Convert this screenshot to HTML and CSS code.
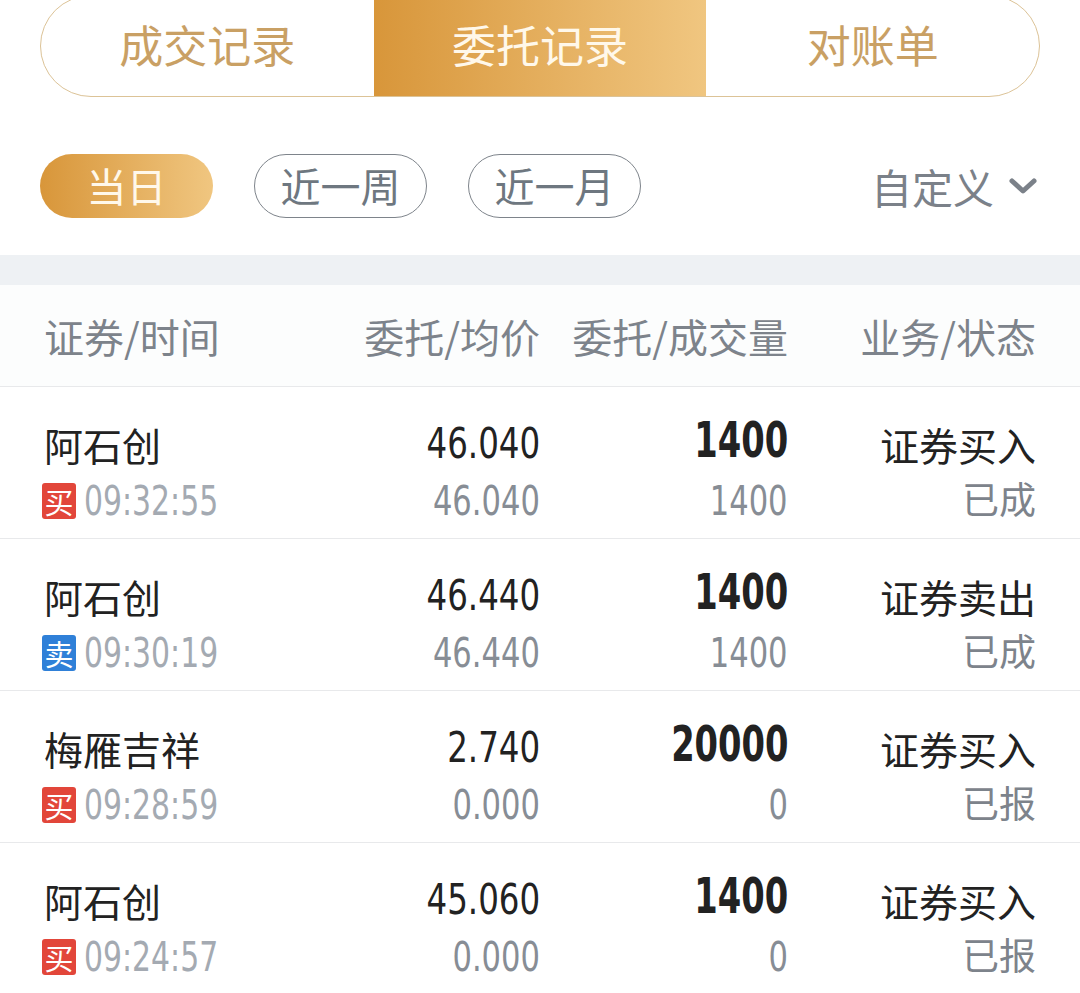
FILE: index.html
```html
<!DOCTYPE html>
<html lang="zh-CN">
<head>
    <meta charset="UTF-8">
    <meta name="viewport" content="width=device-width, initial-scale=1.0">
    <title>委托记录</title>
    <link rel="stylesheet" href="styles.css">
</head>
<body>
    <div class="top">
        <div class="tabs">
            <div class="tab">成交记录</div>
            <div class="tab active">委托记录</div>
            <div class="tab">对账单</div>
        </div>

        <div class="filters">
            <div class="pill active">当日</div>
            <div class="pill">近一周</div>
            <div class="pill">近一月</div>
            <div class="custom">
                自定义
                <svg width="30" height="20" viewBox="0 0 30 20">
                    <path d="M4 5 L15 15 L26 5" fill="none" stroke="#7b8189" stroke-width="5" stroke-linecap="round" stroke-linejoin="round"/>
                </svg>
            </div>
        </div>
    </div>

    <div class="band"></div>

    <div class="table">
        <div class="row head">
            <div>证券/时间</div>
            <div class="r">委托/均价</div>
            <div class="r">委托/成交量</div>
            <div class="r">业务/状态</div>
        </div>

        <div class="row">
            <div class="cell">
                <div class="name">阿石创</div>
                <div class="time"><span class="badge buy">买</span><span class="digits">09:32:55</span></div>
            </div>
            <div class="cell r">
                <div class="num"><span>46.040</span></div>
                <div class="num sub"><span>46.040</span></div>
            </div>
            <div class="cell r">
                <div class="num big"><span>1400</span></div>
                <div class="num sub"><span>1400</span></div>
            </div>
            <div class="cell r">
                <div class="name">证券买入</div>
                <div class="status">已成</div>
            </div>
        </div>

        <div class="row">
            <div class="cell">
                <div class="name">阿石创</div>
                <div class="time"><span class="badge sell">卖</span><span class="digits">09:30:19</span></div>
            </div>
            <div class="cell r">
                <div class="num"><span>46.440</span></div>
                <div class="num sub"><span>46.440</span></div>
            </div>
            <div class="cell r">
                <div class="num big"><span>1400</span></div>
                <div class="num sub"><span>1400</span></div>
            </div>
            <div class="cell r">
                <div class="name">证券卖出</div>
                <div class="status">已成</div>
            </div>
        </div>

        <div class="row">
            <div class="cell">
                <div class="name">梅雁吉祥</div>
                <div class="time"><span class="badge buy">买</span><span class="digits">09:28:59</span></div>
            </div>
            <div class="cell r">
                <div class="num"><span>2.740</span></div>
                <div class="num sub"><span>0.000</span></div>
            </div>
            <div class="cell r">
                <div class="num big"><span>20000</span></div>
                <div class="num sub"><span>0</span></div>
            </div>
            <div class="cell r">
                <div class="name">证券买入</div>
                <div class="status">已报</div>
            </div>
        </div>

        <div class="row">
            <div class="cell">
                <div class="name">阿石创</div>
                <div class="time"><span class="badge buy">买</span><span class="digits">09:24:57</span></div>
            </div>
            <div class="cell r">
                <div class="num"><span>45.060</span></div>
                <div class="num sub"><span>0.000</span></div>
            </div>
            <div class="cell r">
                <div class="num big"><span>1400</span></div>
                <div class="num sub"><span>0</span></div>
            </div>
            <div class="cell r">
                <div class="name">证券买入</div>
                <div class="status">已报</div>
            </div>
        </div>
    </div>
</body>
</html>
```

FILE: styles.css
```css
* {
    box-sizing: border-box;
    margin: 0;
    padding: 0;
}

body {
    font-family: "Noto Sans CJK SC", "Noto Sans", sans-serif;
    background: #ffffff;
    color: #222222;
    overflow: hidden;
}

.top {
    padding: 0 40px;
}

.tabs {
    display: flex;
    height: 102px;
    margin-top: -5px;
    border: 1px solid #dcc397;
    border-radius: 52px;
    overflow: hidden;
}

.tab {
    flex: 1;
    display: flex;
    align-items: center;
    justify-content: center;
    font-size: 44px;
    color: #c9a064;
    padding-bottom: 4px;
}

.tab.active {
    background: linear-gradient(to right, #d8963a, #f0c680);
    color: #fff8ea;
}

.filters {
    display: flex;
    align-items: center;
    gap: 41px;
    margin-top: 57px;
    height: 64px;
}

.pill {
    width: 173px;
    height: 64px;
    border: 1px solid #7e848b;
    border-radius: 32px;
    display: flex;
    align-items: center;
    justify-content: center;
    font-size: 40px;
    color: #6e7780;
    padding-bottom: 2px;
}

.pill.active {
    border: none;
    background: linear-gradient(to right, #d8963a, #f0c680);
    color: #fff8ea;
}

.custom {
    margin-left: auto;
    display: flex;
    align-items: center;
    gap: 14px;
    font-size: 41px;
    color: #7b8189;
    padding-right: 2px;
}

.band {
    height: 30px;
    margin-top: 37px;
    background: #eef1f4;
}

.row {
    display: grid;
    grid-template-columns: 300px 196px 248px 248px;
    padding: 0 44px;
    border-bottom: 1px solid #e8e9eb;
    height: 152px;
    padding-top: 28px;
}

.row.head {
    height: 102px;
    padding-top: 0;
    align-items: center;
    font-size: 40px;
    color: #7d838b;
    background: #fcfdfd;
}

.r {
    text-align: right;
}

.name {
    font-size: 39px;
    height: 58px;
    line-height: 58px;
    color: #222222;
}

.time {
    display: flex;
    align-items: center;
    height: 56px;
}

.digits {
    display: inline-block;
    font-family: "DejaVu Sans Condensed", "DejaVu Sans", sans-serif;
    font-size: 40px;
    color: #a4aab2;
    transform: scaleX(0.83);
    transform-origin: left center;
}

.badge {
    display: inline-flex;
    align-items: center;
    justify-content: center;
    width: 34px;
    height: 36px;
    margin-left: -2px;
    margin-right: 8px;
    border-radius: 3px;
    font-size: 29px;
    color: #ffffff;
}

.badge.buy {
    background: #e2463a;
}

.badge.sell {
    background: #2f80d8;
}

.num {
    font-family: "DejaVu Sans Condensed", "DejaVu Sans", sans-serif;
    font-size: 42px;
    height: 58px;
    line-height: 58px;
    color: #222222;
}

.num span {
    display: inline-block;
    transform: scaleX(0.86);
    transform-origin: right center;
}

.num.big {
    font-size: 50px;
    font-weight: bold;
    line-height: 50px;
}

.num.big span {
    transform: scaleX(0.75);
}

.num.sub {
    height: 56px;
    line-height: 56px;
    font-size: 40px;
    color: #878d95;
}

.num.sub span {
    transform: scaleX(0.85);
}

.status {
    font-size: 37px;
    height: 56px;
    line-height: 50px;
    color: #7d838b;
}
```
